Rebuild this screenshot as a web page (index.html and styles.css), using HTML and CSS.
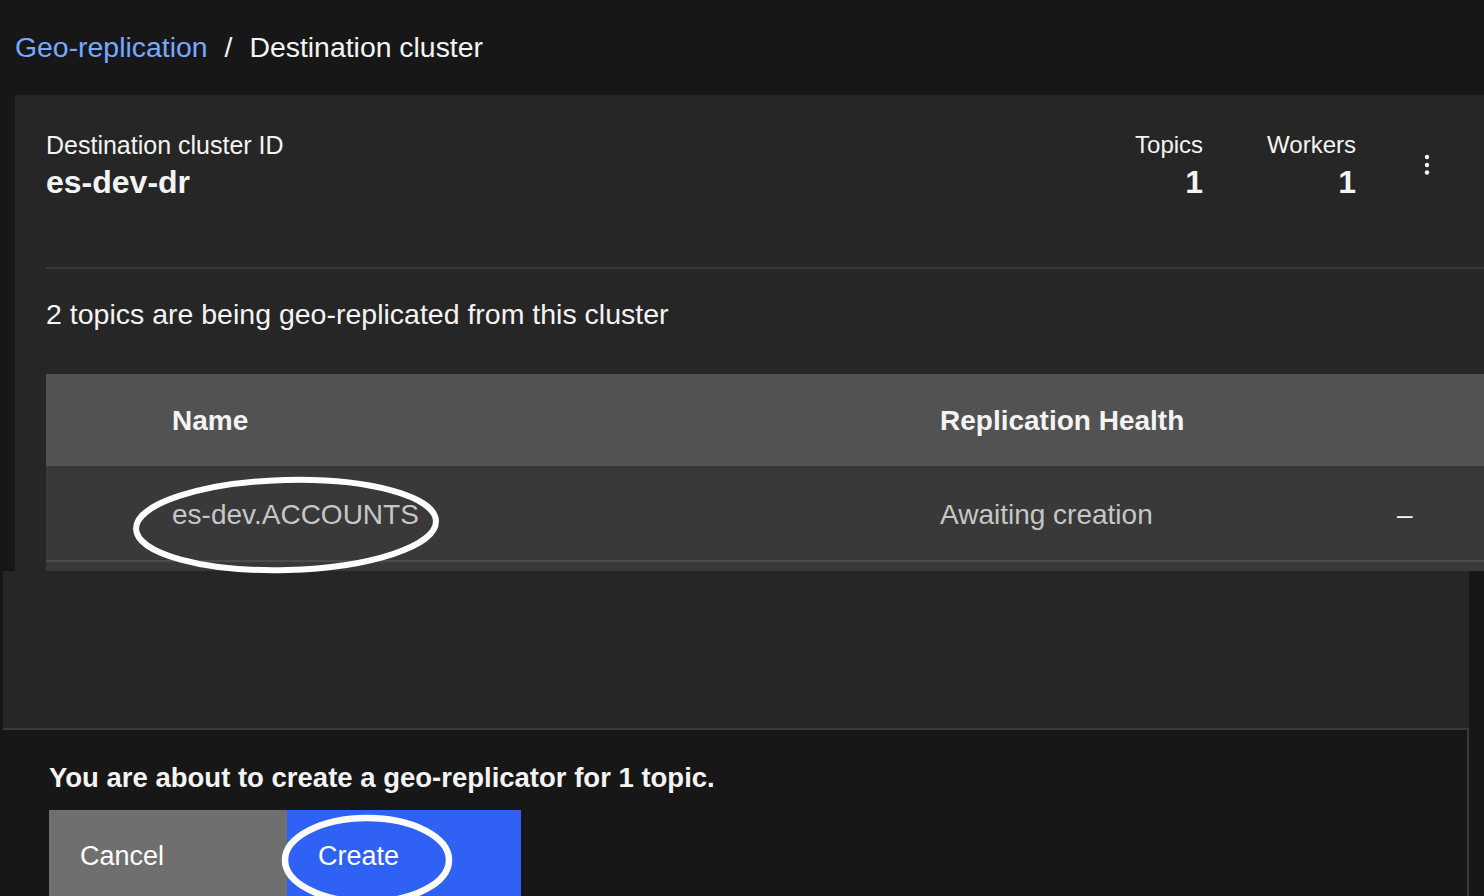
FILE: index.html
```html
<!DOCTYPE html>
<html lang="en">
<head>
<meta charset="utf-8">
<title>Destination cluster</title>
<link rel="stylesheet" href="styles.css">
</head>
<body>
<div class="page">
  <nav class="breadcrumb">
    <a class="crumb-link" href="#">Geo-replication</a>
    <span class="crumb-sep">/</span>
    <span class="crumb-current">Destination cluster</span>
  </nav>

  <section class="panel">
    <div class="summary">
      <div class="cluster">
        <div class="label">Destination cluster ID</div>
        <div class="value">es-dev-dr</div>
      </div>
      <div class="stats">
        <div class="stat">
          <div class="label">Topics</div>
          <div class="value">1</div>
        </div>
        <div class="stat">
          <div class="label">Workers</div>
          <div class="value">1</div>
        </div>
      </div>
      <button class="kebab" aria-label="More options">
        <svg width="8" height="24" viewBox="0 0 8 24"><circle cx="4" cy="4" r="2.2" fill="#f4f4f4"/><circle cx="4" cy="12" r="2.2" fill="#f4f4f4"/><circle cx="4" cy="19.5" r="2.2" fill="#f4f4f4"/></svg>
      </button>
    </div>
    <div class="divider"></div>
    <p class="desc">2 topics are being geo-replicated from this cluster</p>
    <div class="table">
      <div class="thead">
        <div class="cell first">Name</div>
        <div class="cell">Replication Health</div>
        <div class="cell"></div>
      </div>
      <div class="trow">
        <div class="cell first">es-dev.ACCOUNTS</div>
        <div class="cell">Awaiting creation</div>
        <div class="cell dash">–</div>
      </div>
      <div class="trow next"></div>
    </div>
  </section>

  <section class="lower">
    <div class="spacer"></div>
    <footer class="actions">
      <p class="confirm">You are about to create a geo-replicator for 1 topic.</p>
      <div class="buttons">
        <button class="btn btn-secondary">Cancel</button>
        <button class="btn btn-primary">Create</button>
      </div>
    </footer>
  </section>

  <svg class="annotations" width="1484" height="896" viewBox="0 0 1484 896">
    <ellipse cx="286" cy="525" rx="150" ry="45" transform="rotate(-1.5 286 525)" fill="none" stroke="#ffffff" stroke-width="6"/>
    <ellipse cx="367" cy="860" rx="82" ry="42" fill="none" stroke="#ffffff" stroke-width="6.5"/>
  </svg>
</div>
</body>
</html>
```

FILE: styles.css
```css
* { box-sizing: border-box; }

html, body {
  margin: 0;
  padding: 0;
  background: #171717;
  width: 1484px;
  height: 896px;
  overflow: hidden;
}

body {
  font-family: "Liberation Sans", Arial, Helvetica, sans-serif;
  color: #f4f4f4;
}

.page {
  position: relative;
  width: 1484px;
  height: 896px;
  overflow: hidden;
}

/* Breadcrumb */
.breadcrumb {
  height: 95px;
  padding-left: 15px;
  display: flex;
  align-items: center;
  font-size: 28.4px;
  line-height: 34px;
  padding-bottom: 1px;
}
.crumb-link {
  color: #78a9ff;
  text-decoration: none;
}
.crumb-sep {
  margin: 0 17px;
  color: #f4f4f4;
}
.crumb-current {
  color: #f4f4f4;
}

/* Panel */
.panel {
  margin-left: 15px;
  height: 476px;
  background: #262626;
  padding-left: 31px;
  overflow: hidden;
}

.summary {
  display: flex;
  align-items: flex-start;
  padding-top: 35px;
  padding-right: 41px;
}
.cluster {
  flex: 1;
}
.label {
  font-size: 24px;
  line-height: 30px;
  color: #f4f4f4;
}
.cluster .label {
  font-size: 25px;
}
.value {
  font-size: 32px;
  font-weight: bold;
  line-height: 44px;
  color: #f4f4f4;
}
.stats {
  display: flex;
  gap: 64px;
}
.stat {
  text-align: right;
}
.kebab {
  margin-left: 55px;
  margin-top: 19px;
  width: 32px;
  height: 32px;
  padding: 0;
  border: 0;
  background: transparent;
  display: flex;
  align-items: center;
  justify-content: center;
}

.divider {
  margin-top: 63px;
  height: 2px;
  background: #393939;
}

.desc {
  margin: 28px 0 0 0;
  font-size: 28.5px;
  line-height: 34px;
  color: #f4f4f4;
}

/* Table */
.table {
  margin-top: 43px;
}
.thead,
.trow {
  display: grid;
  grid-template-columns: 894px 452px 1fr;
  align-items: center;
}
.thead {
  height: 92px;
  background: #525252;
  font-size: 28px;
  font-weight: bold;
  color: #f4f4f4;
  padding-top: 2px;
}
.trow {
  height: 96px;
  background: #393939;
  border-bottom: 2px solid #4c4c4c;
  font-size: 28px;
  color: #c6c6c6;
  padding-top: 4px;
}
.trow.next {
  border-bottom: 0;
}
.cell.first {
  padding-left: 126px;
}
.cell.dash {
  padding-left: 5px;
  color: #f4f4f4;
}

/* Lower area */
.lower {
  margin-left: 3px;
  width: 1466px;
  height: 325px;
  background: #262626;
}
.spacer {
  height: 157px;
}
.actions {
  height: 168px;
  background: #171717;
  border-top: 2px solid #393939;
  border-right: 2px solid #393939;
  padding: 31px 0 0 46px;
}
.confirm {
  margin: 0;
  font-size: 27.5px;
  font-weight: bold;
  line-height: 34px;
  color: #f4f4f4;
}
.buttons {
  margin-top: 15px;
  display: flex;
  align-items: flex-start;
}
.btn {
  height: 92px;
  border: 0;
  margin: 0;
  padding: 0 0 0 31px;
  text-align: left;
  display: block;
  font-family: "Liberation Sans", Arial, Helvetica, sans-serif;
  font-size: 27px;
  line-height: 34px;
  color: #ffffff;
}
.btn-secondary {
  width: 238px;
  background: #6f6f6f;
}
.btn-primary {
  width: 234px;
  background: #2f62f4;
}

/* Hand-drawn annotation marks over content */
.annotations {
  position: absolute;
  top: 0;
  left: 0;
  pointer-events: none;
}
```
